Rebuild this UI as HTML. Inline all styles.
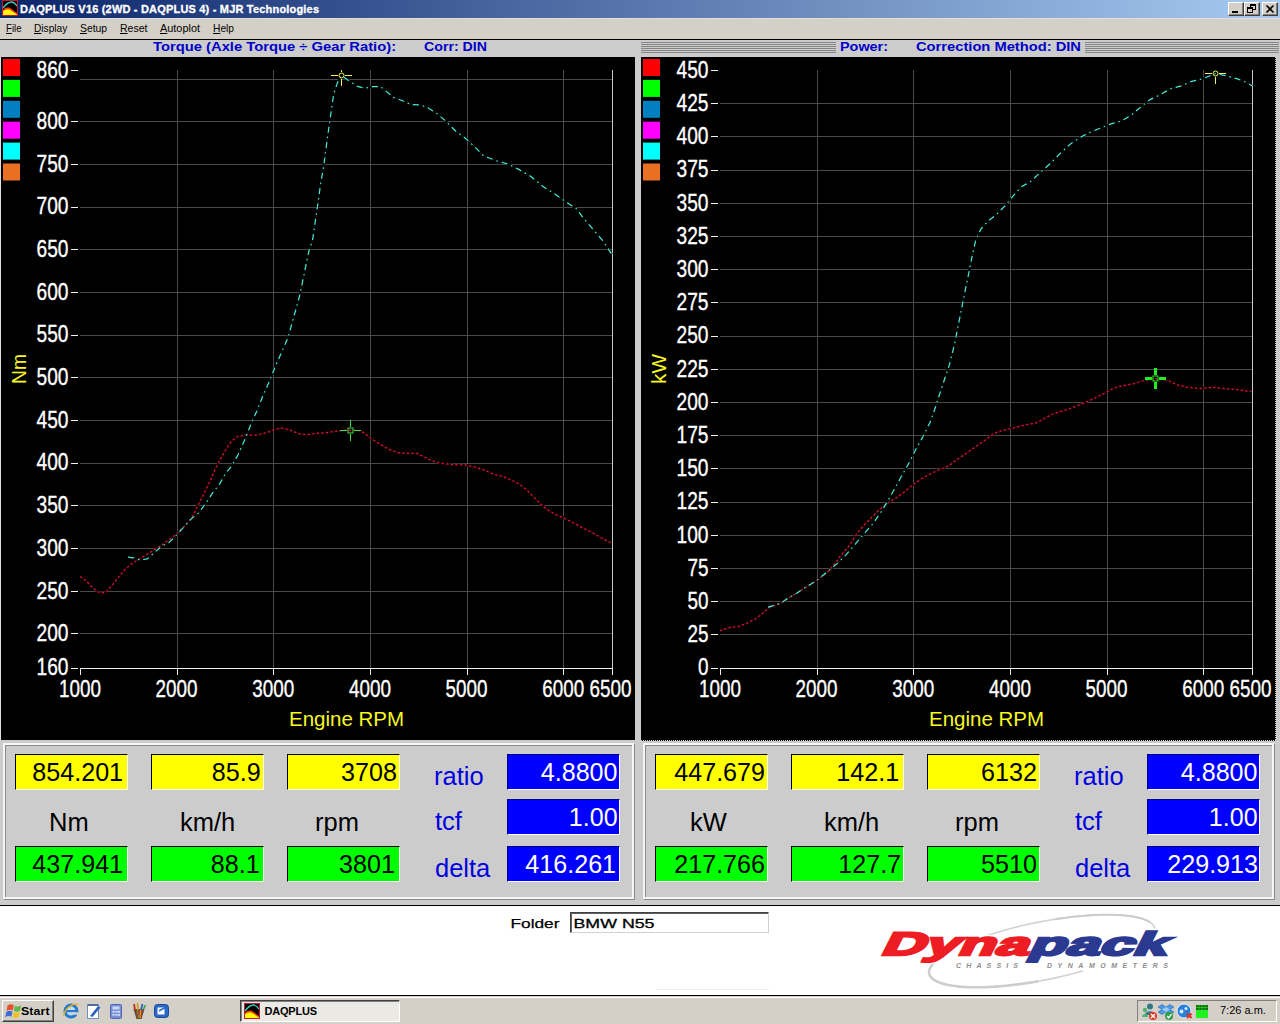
<!DOCTYPE html>
<html><head><meta charset="utf-8"><title>DAQPLUS V16</title>
<style>
html,body{margin:0;padding:0;background:#fff;}
body{width:1280px;height:1024px;overflow:hidden;position:relative;font-family:"Liberation Sans", sans-serif;}
#root{position:absolute;left:0;top:0;width:1280px;height:1024px;overflow:hidden;background:#ccc;}
#root div,#root svg,#root span.abs{position:absolute;}
svg text{font-family:"Liberation Sans", sans-serif;}
#titlebar{left:0;top:0;width:1280px;height:18px;background:linear-gradient(90deg,#0a246a 0%,#a6caf0 100%);}
#title{left:20px;top:2px;color:#fff;font-weight:bold;font-size:11px;line-height:14px;white-space:nowrap;letter-spacing:0.19px;-webkit-text-stroke:0.3px #fff;}
.wbtn{top:2px;width:14px;height:12px;background:#d4d0c8;border:1px solid;border-color:#fff #404040 #404040 #fff;box-shadow:inset -1px -1px 0 #808080;}
#menubar{left:0;top:18px;width:1280px;height:21px;background:#d4d0c8;box-shadow:inset 0 1px 0 #e2dfd8;}
#menubar span{position:absolute;top:4px;font-size:11px;line-height:13px;color:#000;white-space:nowrap;transform-origin:0 0;}
#menubar u{text-decoration:underline;}
#mline{left:0;top:39px;width:1280px;height:1px;background:#000;}
#hdrL{left:0;top:40px;width:641px;height:17px;background:#ccc;}
#hdrR{left:641px;top:40px;width:639px;height:17px;background:#ccc;}
#stripes{left:0;top:2px;width:638px;height:11px;background:repeating-linear-gradient(180deg,#858585 0,#858585 1px,#ccc 1px,#ccc 2px);}
#hdrRlab{left:195px;top:0;width:249px;height:17px;background:#ccc;}
.hd{font-weight:bold;font-size:13px;line-height:15px;color:#0000c8;white-space:nowrap;top:-1px;transform-origin:0 0;}
.plot{top:57px;width:634px;height:683px;background:#000;}
#edgeL{left:0;top:57px;width:1px;height:683px;background:#e0e0e0;}
.frame{top:743px;width:627px;height:152px;border:2px solid #f6f6f6;box-shadow:1px 1px 0 #8c8c8c, inset 1px 1px 0 #8c8c8c;}
.box{width:111px;height:34px;border:1px solid;border-color:#000 #fff #fff #000;font-size:26px;line-height:34px;text-align:right;white-space:nowrap;}
.box span{position:absolute;right:2px;top:0px;transform:scaleX(.965);transform-origin:100% 50%;}
.box i.p{display:inline-block;width:1.8px;}
.box.y{background:#ffff00;color:#000;}
.box.g{background:#00ff00;color:#000;}
.box.b{background:#0000ff;color:#fff;border-color:#000080 #fff #fff #000080;}
.box.b span{right:1px;}
.unit{top:807px;font-size:25.5px;line-height:30px;color:#000;white-space:nowrap;}
.blab{font-size:25.5px;line-height:30px;color:#0000e0;white-space:nowrap;}
#pline{left:0;top:905px;width:1280px;height:1px;background:#000;}
#footer{left:0;top:906px;width:1280px;height:89px;background:#fff;}
#fline{left:0;top:995px;width:1280px;height:1px;background:#000;}
#folderbox{left:570px;top:6px;width:197px;height:19px;border:1px solid;border-color:#404040 #d0d0d0 #d0d0d0 #404040;box-shadow:inset 1px 1px 0 #606060;background:#fff;}
#taskbar{left:0;top:996px;width:1280px;height:28px;background:#d4d0c8;box-shadow:inset 0 1px 0 #d4d0c8, inset 0 2px 0 #fff;}
#start{left:2px;top:4px;width:50px;height:20px;background:#d4d0c8;border:1px solid;border-color:#fff #404040 #404040 #fff;box-shadow:inset -1px -1px 0 #808080;}
#start b{position:absolute;left:18px;top:4px;font-size:11px;line-height:13px;letter-spacing:0.1px;transform:scaleX(1.12);transform-origin:0 0;}
#task{left:240px;top:4px;width:158px;height:20px;border:1px solid;border-color:#404040 #fff #fff #404040;box-shadow:inset 1px 1px 0 #808080;background:#ebe9e4;}
#task b{position:absolute;left:23.5px;top:3.5px;font-size:11px;line-height:13px;letter-spacing:-0.2px;}
#tray{left:1137px;top:4px;width:138px;height:20px;border:1px solid;border-color:#808080 #fff #fff #808080;}
#clock{left:82px;top:3px;font-size:11px;line-height:13px;white-space:nowrap;}
.appicon{position:absolute;}
</style></head>
<body>
<div id="root">
  <div id="titlebar">
    <svg class="appicon" style="left:2px;top:0px" width="16" height="16" viewBox="0 0 16 16">
<rect x="0" y="0" width="16" height="16" fill="#000"/>
<path d="M1 16 L1 10 C3 7.5 6 7 8 8 C11 9.5 13 12 15 13 L15 16 Z" fill="#ff4010"/>
<path d="M1 16 L1 11.5 C3 9.5 6 9 8 10 C11 11.5 13 13.5 15 14.5 L15 16 Z" fill="#ffff00"/>
<path d="M1 8 C4 4 7 2 9.5 2 C12 2 13.5 4 15 6" fill="none" stroke="#30d8c8" stroke-width="1.3"/>
<rect x="0.5" y="0.5" width="15" height="15" fill="none" stroke="#c01838" stroke-width="1"/>
</svg>
    <div id="title">DAQPLUS V16 (2WD - DAQPLUS 4) - MJR Technologies</div>
    <div class="wbtn" style="left:1228px"><svg width="14" height="12" style="left:0;top:0"><rect x="3" y="8" width="6" height="2" fill="#000"/></svg></div>
    <div class="wbtn" style="left:1244px"><svg width="14" height="12" style="left:0;top:0"><rect x="5.5" y="1.5" width="5" height="5" fill="none" stroke="#000"/><rect x="5" y="1" width="6" height="2" fill="#000"/><rect x="2.5" y="4.5" width="5" height="5" fill="#d4d0c8" stroke="#000"/><rect x="2" y="4" width="6" height="2" fill="#000"/></svg></div>
    <div class="wbtn" style="left:1262px"><svg width="14" height="12" style="left:0;top:0"><path d="M3.5 2.5 L10.5 9.5 M10.5 2.5 L3.5 9.5" stroke="#000" stroke-width="1.7" fill="none"/></svg></div>
  </div>
  <div id="menubar">
    <span style="left:5.5px;transform:scaleX(.874)"><u>F</u>ile</span>
    <span style="left:33.7px;transform:scaleX(.923)"><u>D</u>isplay</span>
    <span style="left:80px;transform:scaleX(.939)"><u>S</u>etup</span>
    <span style="left:119.5px;transform:scaleX(.957)"><u>R</u>eset</span>
    <span style="left:160px;transform:scaleX(.991)"><u>A</u>utoplot</span>
    <span style="left:212.5px;transform:scaleX(.928)"><u>H</u>elp</span>
  </div>
  <div id="mline"></div>
  <div id="hdrL">
    <span class="abs hd" style="left:153px;transform:scaleX(1.136)" id="t1">Torque (Axle Torque &divide; Gear Ratio):</span>
    <span class="abs hd" style="left:424px;transform:scaleX(1.09)" id="t2">Corr: DIN</span>
  </div>
  <div id="hdrR">
    <div id="stripes"></div>
    <div id="hdrRlab">
      <span class="abs hd" style="left:4px;transform:scaleX(1.107)" id="t3">Power:</span>
      <span class="abs hd" style="left:80px;transform:scaleX(1.131)" id="t4">Correction Method: DIN</span>
    </div>
  </div>
  <div class="plot" style="left:1px"></div>
  <div class="plot" style="left:641px;width:635px;height:684px"></div>
  <div id="edgeL"></div>
  <svg id="charts" style="left:0;top:0" width="1280" height="742" viewBox="0 0 1280 742">
<rect x="3" y="59.0" width="17" height="17" fill="#ff0000"/>
<rect x="3" y="79.9" width="17" height="17" fill="#00ff00"/>
<rect x="3" y="100.8" width="17" height="17" fill="#0080c0"/>
<rect x="3" y="121.7" width="17" height="17" fill="#ff00ff"/>
<rect x="3" y="142.6" width="17" height="17" fill="#00ffff"/>
<rect x="3" y="163.5" width="17" height="17" fill="#e87020"/>
<line x1="80" y1="79.5" x2="612" y2="79.5" stroke="#4a4a4a" stroke-width="1"/>
<line x1="80" y1="121.5" x2="612" y2="121.5" stroke="#4a4a4a" stroke-width="1"/>
<line x1="80" y1="164.5" x2="612" y2="164.5" stroke="#4a4a4a" stroke-width="1"/>
<line x1="80" y1="207.5" x2="612" y2="207.5" stroke="#4a4a4a" stroke-width="1"/>
<line x1="80" y1="249.5" x2="612" y2="249.5" stroke="#4a4a4a" stroke-width="1"/>
<line x1="80" y1="292.5" x2="612" y2="292.5" stroke="#4a4a4a" stroke-width="1"/>
<line x1="80" y1="335.5" x2="612" y2="335.5" stroke="#4a4a4a" stroke-width="1"/>
<line x1="80" y1="377.5" x2="612" y2="377.5" stroke="#4a4a4a" stroke-width="1"/>
<line x1="80" y1="420.5" x2="612" y2="420.5" stroke="#4a4a4a" stroke-width="1"/>
<line x1="80" y1="463.5" x2="612" y2="463.5" stroke="#4a4a4a" stroke-width="1"/>
<line x1="80" y1="505.5" x2="612" y2="505.5" stroke="#4a4a4a" stroke-width="1"/>
<line x1="80" y1="548.5" x2="612" y2="548.5" stroke="#4a4a4a" stroke-width="1"/>
<line x1="80" y1="591.5" x2="612" y2="591.5" stroke="#4a4a4a" stroke-width="1"/>
<line x1="80" y1="633.5" x2="612" y2="633.5" stroke="#4a4a4a" stroke-width="1"/>
<line x1="177.5" y1="70" x2="177.5" y2="668" stroke="#4a4a4a" stroke-width="1"/>
<line x1="273.5" y1="70" x2="273.5" y2="668" stroke="#4a4a4a" stroke-width="1"/>
<line x1="370.5" y1="70" x2="370.5" y2="668" stroke="#4a4a4a" stroke-width="1"/>
<line x1="467.5" y1="70" x2="467.5" y2="668" stroke="#4a4a4a" stroke-width="1"/>
<line x1="563.5" y1="70" x2="563.5" y2="668" stroke="#4a4a4a" stroke-width="1"/>
<line x1="612.5" y1="70" x2="612.5" y2="668" stroke="#c8c8c8" stroke-width="1"/>
<line x1="80" y1="668.5" x2="613" y2="668.5" stroke="#f0f0f0" stroke-width="1"/>
<text x="68.5" y="77.8" font-size="24.3" fill="#ffffff" font-weight="normal" text-anchor="end" textLength="32" lengthAdjust="spacingAndGlyphs" stroke="#fff" stroke-width="0.35">860</text>
<line x1="71" y1="70.5" x2="78" y2="70.5" stroke="#f0f0f0" stroke-width="1"/>
<text x="68.5" y="129.0" font-size="24.3" fill="#ffffff" font-weight="normal" text-anchor="end" textLength="32" lengthAdjust="spacingAndGlyphs" stroke="#fff" stroke-width="0.35">800</text>
<line x1="71" y1="121.5" x2="78" y2="121.5" stroke="#f0f0f0" stroke-width="1"/>
<text x="68.5" y="171.7" font-size="24.3" fill="#ffffff" font-weight="normal" text-anchor="end" textLength="32" lengthAdjust="spacingAndGlyphs" stroke="#fff" stroke-width="0.35">750</text>
<line x1="71" y1="164.5" x2="78" y2="164.5" stroke="#f0f0f0" stroke-width="1"/>
<text x="68.5" y="214.4" font-size="24.3" fill="#ffffff" font-weight="normal" text-anchor="end" textLength="32" lengthAdjust="spacingAndGlyphs" stroke="#fff" stroke-width="0.35">700</text>
<line x1="71" y1="207.5" x2="78" y2="207.5" stroke="#f0f0f0" stroke-width="1"/>
<text x="68.5" y="257.1" font-size="24.3" fill="#ffffff" font-weight="normal" text-anchor="end" textLength="32" lengthAdjust="spacingAndGlyphs" stroke="#fff" stroke-width="0.35">650</text>
<line x1="71" y1="249.5" x2="78" y2="249.5" stroke="#f0f0f0" stroke-width="1"/>
<text x="68.5" y="299.7" font-size="24.3" fill="#ffffff" font-weight="normal" text-anchor="end" textLength="32" lengthAdjust="spacingAndGlyphs" stroke="#fff" stroke-width="0.35">600</text>
<line x1="71" y1="292.5" x2="78" y2="292.5" stroke="#f0f0f0" stroke-width="1"/>
<text x="68.5" y="342.4" font-size="24.3" fill="#ffffff" font-weight="normal" text-anchor="end" textLength="32" lengthAdjust="spacingAndGlyphs" stroke="#fff" stroke-width="0.35">550</text>
<line x1="71" y1="335.5" x2="78" y2="335.5" stroke="#f0f0f0" stroke-width="1"/>
<text x="68.5" y="385.1" font-size="24.3" fill="#ffffff" font-weight="normal" text-anchor="end" textLength="32" lengthAdjust="spacingAndGlyphs" stroke="#fff" stroke-width="0.35">500</text>
<line x1="71" y1="377.5" x2="78" y2="377.5" stroke="#f0f0f0" stroke-width="1"/>
<text x="68.5" y="427.8" font-size="24.3" fill="#ffffff" font-weight="normal" text-anchor="end" textLength="32" lengthAdjust="spacingAndGlyphs" stroke="#fff" stroke-width="0.35">450</text>
<line x1="71" y1="420.5" x2="78" y2="420.5" stroke="#f0f0f0" stroke-width="1"/>
<text x="68.5" y="470.4" font-size="24.3" fill="#ffffff" font-weight="normal" text-anchor="end" textLength="32" lengthAdjust="spacingAndGlyphs" stroke="#fff" stroke-width="0.35">400</text>
<line x1="71" y1="463.5" x2="78" y2="463.5" stroke="#f0f0f0" stroke-width="1"/>
<text x="68.5" y="513.1" font-size="24.3" fill="#ffffff" font-weight="normal" text-anchor="end" textLength="32" lengthAdjust="spacingAndGlyphs" stroke="#fff" stroke-width="0.35">350</text>
<line x1="71" y1="505.5" x2="78" y2="505.5" stroke="#f0f0f0" stroke-width="1"/>
<text x="68.5" y="555.8" font-size="24.3" fill="#ffffff" font-weight="normal" text-anchor="end" textLength="32" lengthAdjust="spacingAndGlyphs" stroke="#fff" stroke-width="0.35">300</text>
<line x1="71" y1="548.5" x2="78" y2="548.5" stroke="#f0f0f0" stroke-width="1"/>
<text x="68.5" y="598.5" font-size="24.3" fill="#ffffff" font-weight="normal" text-anchor="end" textLength="32" lengthAdjust="spacingAndGlyphs" stroke="#fff" stroke-width="0.35">250</text>
<line x1="71" y1="591.5" x2="78" y2="591.5" stroke="#f0f0f0" stroke-width="1"/>
<text x="68.5" y="641.2" font-size="24.3" fill="#ffffff" font-weight="normal" text-anchor="end" textLength="32" lengthAdjust="spacingAndGlyphs" stroke="#fff" stroke-width="0.35">200</text>
<line x1="71" y1="633.5" x2="78" y2="633.5" stroke="#f0f0f0" stroke-width="1"/>
<text x="68.5" y="675.3" font-size="24.3" fill="#ffffff" font-weight="normal" text-anchor="end" textLength="32" lengthAdjust="spacingAndGlyphs" stroke="#fff" stroke-width="0.35">160</text>
<line x1="71" y1="668.5" x2="78" y2="668.5" stroke="#f0f0f0" stroke-width="1"/>
<line x1="80.5" y1="668" x2="80.5" y2="675" stroke="#f0f0f0" stroke-width="1"/>
<text x="80.0" y="697.2" font-size="24.5" fill="#ffffff" font-weight="normal" text-anchor="middle" textLength="42" lengthAdjust="spacingAndGlyphs" stroke="#fff" stroke-width="0.35">1000</text>
<line x1="177.5" y1="668" x2="177.5" y2="675" stroke="#f0f0f0" stroke-width="1"/>
<text x="176.6" y="697.2" font-size="24.5" fill="#ffffff" font-weight="normal" text-anchor="middle" textLength="42" lengthAdjust="spacingAndGlyphs" stroke="#fff" stroke-width="0.35">2000</text>
<line x1="273.5" y1="668" x2="273.5" y2="675" stroke="#f0f0f0" stroke-width="1"/>
<text x="273.3" y="697.2" font-size="24.5" fill="#ffffff" font-weight="normal" text-anchor="middle" textLength="42" lengthAdjust="spacingAndGlyphs" stroke="#fff" stroke-width="0.35">3000</text>
<line x1="370.5" y1="668" x2="370.5" y2="675" stroke="#f0f0f0" stroke-width="1"/>
<text x="369.9" y="697.2" font-size="24.5" fill="#ffffff" font-weight="normal" text-anchor="middle" textLength="42" lengthAdjust="spacingAndGlyphs" stroke="#fff" stroke-width="0.35">4000</text>
<line x1="467.5" y1="668" x2="467.5" y2="675" stroke="#f0f0f0" stroke-width="1"/>
<text x="466.5" y="697.2" font-size="24.5" fill="#ffffff" font-weight="normal" text-anchor="middle" textLength="42" lengthAdjust="spacingAndGlyphs" stroke="#fff" stroke-width="0.35">5000</text>
<line x1="563.5" y1="668" x2="563.5" y2="675" stroke="#f0f0f0" stroke-width="1"/>
<text x="563.2" y="697.2" font-size="24.5" fill="#ffffff" font-weight="normal" text-anchor="middle" textLength="42" lengthAdjust="spacingAndGlyphs" stroke="#fff" stroke-width="0.35">6000</text>
<line x1="612.5" y1="668" x2="612.5" y2="675" stroke="#f0f0f0" stroke-width="1"/>
<text x="610.5" y="697.2" font-size="24.5" fill="#ffffff" font-weight="normal" text-anchor="middle" textLength="42" lengthAdjust="spacingAndGlyphs" stroke="#fff" stroke-width="0.35">6500</text>
<text x="346.5" y="726" font-size="20" fill="#f8f820" font-weight="normal" text-anchor="middle" textLength="115" lengthAdjust="spacingAndGlyphs" >Engine RPM</text>
<g transform="translate(25.6,369) rotate(-90)"><text x="0" y="0" font-size="20.5" fill="#f8f820" font-weight="normal" text-anchor="middle" textLength="30" lengthAdjust="spacingAndGlyphs" >Nm</text></g>
<polyline points="80.3,576.6 86.6,581.3 92.8,588.1 99.1,592.5 105.3,592.5 111.6,585.9 117.8,578.1 124.1,570.3 131.9,563.4 139.7,558.8 147.5,554.1 156.9,548.4 167.8,540.6 177.2,533.4 185.0,525.6 191.3,518.8 197.5,506.3 203.8,493.8 210.0,481.3 214.7,470.3 219.4,460.9 225.6,450.0 231.9,440.6 238.1,436.3 247.5,435.0 256.9,435.0 266.3,432.8 275.6,429.1 283.4,428.1 291.3,430.6 299.1,433.8 306.9,434.7 316.3,433.4 325.6,432.8 335.0,431.3 344.4,430.4 350.5,430.4 360.5,430.6 365.2,433.9 371.0,438.6 379.2,443.8 388.6,449.1 398.0,452.7 407.3,453.4 416.7,453.4 423.8,456.6 430.8,460.2 440.2,463.2 451.9,464.6 465.9,465.1 475.3,467.2 484.7,470.2 494.1,474.5 503.4,476.6 512.8,480.8 519.8,484.3 526.9,490.2 533.9,497.2 540.9,504.2 548.0,510.1 555.0,514.3 564.4,518.3 573.8,523.0 583.1,528.1 592.5,532.8 601.9,538.2 611.3,543.1" fill="none" stroke="#200008" stroke-width="2.2" stroke-linejoin="round"/>
<polyline points="128.1,557.2 133.4,557.8 139.7,560.0 147.5,558.8 153.8,553.1 161.6,546.3 169.4,542.2 177.2,534.4 185.0,525.6 191.3,518.8 199.1,512.5 206.9,501.6 213.1,492.2 219.4,484.4 225.6,473.4 231.9,465.6 238.1,454.7 244.4,440.6 250.6,425.0 256.9,410.9 263.1,395.3 269.4,381.3 275.6,365.6 281.9,351.6 288.1,337.5 292.8,320.3 296.0,309.0 299.4,296.6 304.0,274.8 308.8,251.3 312.5,240.4 316.6,212.3 320.6,184.1 323.8,165.4 327.5,137.3 330.6,115.4 333.8,93.5 337.5,82.6 341.6,75.7 349.4,81.0 357.2,86.3 365.0,88.2 372.8,86.6 380.6,86.6 386.9,91.9 393.1,97.3 402.5,100.7 410.3,104.4 418.1,104.8 425.9,106.6 435.3,112.3 444.7,120.1 455.6,131.0 465.0,137.9 474.4,146.6 483.8,156.0 496.3,160.7 507.2,163.8 518.1,169.1 530.6,176.3 543.1,186.6 555.6,194.4 565.0,201.3 575.9,208.2 583.8,218.5 593.1,229.4 602.5,240.4 611.9,254.4" fill="none" stroke="#020a09" stroke-width="2.2" stroke-linejoin="round"/>
<polyline points="80.3,576.6 86.6,581.3 92.8,588.1 99.1,592.5 105.3,592.5 111.6,585.9 117.8,578.1 124.1,570.3 131.9,563.4 139.7,558.8 147.5,554.1 156.9,548.4 167.8,540.6 177.2,533.4 185.0,525.6 191.3,518.8 197.5,506.3 203.8,493.8 210.0,481.3 214.7,470.3 219.4,460.9 225.6,450.0 231.9,440.6 238.1,436.3 247.5,435.0 256.9,435.0 266.3,432.8 275.6,429.1 283.4,428.1 291.3,430.6 299.1,433.8 306.9,434.7 316.3,433.4 325.6,432.8 335.0,431.3 344.4,430.4 350.5,430.4 360.5,430.6 365.2,433.9 371.0,438.6 379.2,443.8 388.6,449.1 398.0,452.7 407.3,453.4 416.7,453.4 423.8,456.6 430.8,460.2 440.2,463.2 451.9,464.6 465.9,465.1 475.3,467.2 484.7,470.2 494.1,474.5 503.4,476.6 512.8,480.8 519.8,484.3 526.9,490.2 533.9,497.2 540.9,504.2 548.0,510.1 555.0,514.3 564.4,518.3 573.8,523.0 583.1,528.1 592.5,532.8 601.9,538.2 611.3,543.1" fill="none" stroke="#e01830" stroke-width="1.25" stroke-dasharray="2 2.6" stroke-linejoin="round"/>
<polyline points="128.1,557.2 133.4,557.8 139.7,560.0 147.5,558.8 153.8,553.1 161.6,546.3 169.4,542.2 177.2,534.4 185.0,525.6 191.3,518.8 199.1,512.5 206.9,501.6 213.1,492.2 219.4,484.4 225.6,473.4 231.9,465.6 238.1,454.7 244.4,440.6 250.6,425.0 256.9,410.9 263.1,395.3 269.4,381.3 275.6,365.6 281.9,351.6 288.1,337.5 292.8,320.3 296.0,309.0 299.4,296.6 304.0,274.8 308.8,251.3 312.5,240.4 316.6,212.3 320.6,184.1 323.8,165.4 327.5,137.3 330.6,115.4 333.8,93.5 337.5,82.6 341.6,75.7 349.4,81.0 357.2,86.3 365.0,88.2 372.8,86.6 380.6,86.6 386.9,91.9 393.1,97.3 402.5,100.7 410.3,104.4 418.1,104.8 425.9,106.6 435.3,112.3 444.7,120.1 455.6,131.0 465.0,137.9 474.4,146.6 483.8,156.0 496.3,160.7 507.2,163.8 518.1,169.1 530.6,176.3 543.1,186.6 555.6,194.4 565.0,201.3 575.9,208.2 583.8,218.5 593.1,229.4 602.5,240.4 611.9,254.4" fill="none" stroke="#48e8d8" stroke-width="1.2" stroke-dasharray="6 4 1.5 4" stroke-linejoin="round"/>
<circle cx="341.5" cy="75.5" r="2.5" fill="none" stroke="#f0f060" stroke-width="1"/><line x1="331.0" y1="75.5" x2="338.0" y2="75.5" stroke="#f0f060" stroke-width="1"/><line x1="345.0" y1="75.5" x2="352.0" y2="75.5" stroke="#f0f060" stroke-width="1"/><line x1="341.5" y1="70" x2="341.5" y2="72.0" stroke="#f0f060" stroke-width="1"/><line x1="341.5" y1="79.0" x2="341.5" y2="86.0" stroke="#f0f060" stroke-width="1"/>
<rect x="348.0" y="428.0" width="5" height="5" fill="none" stroke="#40e040" stroke-width="1"/><line x1="340.0" y1="430.5" x2="347.0" y2="430.5" stroke="#40e040" stroke-width="1"/><line x1="354.0" y1="430.5" x2="361.0" y2="430.5" stroke="#40e040" stroke-width="1"/><line x1="350.5" y1="420.0" x2="350.5" y2="427.0" stroke="#40e040" stroke-width="1"/><line x1="350.5" y1="434.0" x2="350.5" y2="441.0" stroke="#40e040" stroke-width="1"/>
<rect x="643" y="59.0" width="17" height="17" fill="#ff0000"/>
<rect x="643" y="79.9" width="17" height="17" fill="#00ff00"/>
<rect x="643" y="100.8" width="17" height="17" fill="#0080c0"/>
<rect x="643" y="121.7" width="17" height="17" fill="#ff00ff"/>
<rect x="643" y="142.6" width="17" height="17" fill="#00ffff"/>
<rect x="643" y="163.5" width="17" height="17" fill="#e87020"/>
<line x1="720" y1="103.5" x2="1252" y2="103.5" stroke="#4a4a4a" stroke-width="1"/>
<line x1="720" y1="136.5" x2="1252" y2="136.5" stroke="#4a4a4a" stroke-width="1"/>
<line x1="720" y1="170.5" x2="1252" y2="170.5" stroke="#4a4a4a" stroke-width="1"/>
<line x1="720" y1="203.5" x2="1252" y2="203.5" stroke="#4a4a4a" stroke-width="1"/>
<line x1="720" y1="236.5" x2="1252" y2="236.5" stroke="#4a4a4a" stroke-width="1"/>
<line x1="720" y1="269.5" x2="1252" y2="269.5" stroke="#4a4a4a" stroke-width="1"/>
<line x1="720" y1="302.5" x2="1252" y2="302.5" stroke="#4a4a4a" stroke-width="1"/>
<line x1="720" y1="336.5" x2="1252" y2="336.5" stroke="#4a4a4a" stroke-width="1"/>
<line x1="720" y1="369.5" x2="1252" y2="369.5" stroke="#4a4a4a" stroke-width="1"/>
<line x1="720" y1="402.5" x2="1252" y2="402.5" stroke="#4a4a4a" stroke-width="1"/>
<line x1="720" y1="435.5" x2="1252" y2="435.5" stroke="#4a4a4a" stroke-width="1"/>
<line x1="720" y1="468.5" x2="1252" y2="468.5" stroke="#4a4a4a" stroke-width="1"/>
<line x1="720" y1="502.5" x2="1252" y2="502.5" stroke="#4a4a4a" stroke-width="1"/>
<line x1="720" y1="535.5" x2="1252" y2="535.5" stroke="#4a4a4a" stroke-width="1"/>
<line x1="720" y1="568.5" x2="1252" y2="568.5" stroke="#4a4a4a" stroke-width="1"/>
<line x1="720" y1="601.5" x2="1252" y2="601.5" stroke="#4a4a4a" stroke-width="1"/>
<line x1="720" y1="634.5" x2="1252" y2="634.5" stroke="#4a4a4a" stroke-width="1"/>
<line x1="817.5" y1="70" x2="817.5" y2="668" stroke="#4a4a4a" stroke-width="1"/>
<line x1="913.5" y1="70" x2="913.5" y2="668" stroke="#4a4a4a" stroke-width="1"/>
<line x1="1010.5" y1="70" x2="1010.5" y2="668" stroke="#4a4a4a" stroke-width="1"/>
<line x1="1107.5" y1="70" x2="1107.5" y2="668" stroke="#4a4a4a" stroke-width="1"/>
<line x1="1203.5" y1="70" x2="1203.5" y2="668" stroke="#4a4a4a" stroke-width="1"/>
<line x1="1252.5" y1="70" x2="1252.5" y2="668" stroke="#c8c8c8" stroke-width="1"/>
<line x1="720" y1="668.5" x2="1253" y2="668.5" stroke="#f0f0f0" stroke-width="1"/>
<text x="708.5" y="77.8" font-size="24.3" fill="#ffffff" font-weight="normal" text-anchor="end" textLength="32" lengthAdjust="spacingAndGlyphs" stroke="#fff" stroke-width="0.35">450</text>
<line x1="711" y1="70.5" x2="718" y2="70.5" stroke="#f0f0f0" stroke-width="1"/>
<text x="708.5" y="111.0" font-size="24.3" fill="#ffffff" font-weight="normal" text-anchor="end" textLength="32" lengthAdjust="spacingAndGlyphs" stroke="#fff" stroke-width="0.35">425</text>
<line x1="711" y1="103.5" x2="718" y2="103.5" stroke="#f0f0f0" stroke-width="1"/>
<text x="708.5" y="144.2" font-size="24.3" fill="#ffffff" font-weight="normal" text-anchor="end" textLength="32" lengthAdjust="spacingAndGlyphs" stroke="#fff" stroke-width="0.35">400</text>
<line x1="711" y1="136.5" x2="718" y2="136.5" stroke="#f0f0f0" stroke-width="1"/>
<text x="708.5" y="177.4" font-size="24.3" fill="#ffffff" font-weight="normal" text-anchor="end" textLength="32" lengthAdjust="spacingAndGlyphs" stroke="#fff" stroke-width="0.35">375</text>
<line x1="711" y1="170.5" x2="718" y2="170.5" stroke="#f0f0f0" stroke-width="1"/>
<text x="708.5" y="210.6" font-size="24.3" fill="#ffffff" font-weight="normal" text-anchor="end" textLength="32" lengthAdjust="spacingAndGlyphs" stroke="#fff" stroke-width="0.35">350</text>
<line x1="711" y1="203.5" x2="718" y2="203.5" stroke="#f0f0f0" stroke-width="1"/>
<text x="708.5" y="243.8" font-size="24.3" fill="#ffffff" font-weight="normal" text-anchor="end" textLength="32" lengthAdjust="spacingAndGlyphs" stroke="#fff" stroke-width="0.35">325</text>
<line x1="711" y1="236.5" x2="718" y2="236.5" stroke="#f0f0f0" stroke-width="1"/>
<text x="708.5" y="277.0" font-size="24.3" fill="#ffffff" font-weight="normal" text-anchor="end" textLength="32" lengthAdjust="spacingAndGlyphs" stroke="#fff" stroke-width="0.35">300</text>
<line x1="711" y1="269.5" x2="718" y2="269.5" stroke="#f0f0f0" stroke-width="1"/>
<text x="708.5" y="310.2" font-size="24.3" fill="#ffffff" font-weight="normal" text-anchor="end" textLength="32" lengthAdjust="spacingAndGlyphs" stroke="#fff" stroke-width="0.35">275</text>
<line x1="711" y1="302.5" x2="718" y2="302.5" stroke="#f0f0f0" stroke-width="1"/>
<text x="708.5" y="343.4" font-size="24.3" fill="#ffffff" font-weight="normal" text-anchor="end" textLength="32" lengthAdjust="spacingAndGlyphs" stroke="#fff" stroke-width="0.35">250</text>
<line x1="711" y1="336.5" x2="718" y2="336.5" stroke="#f0f0f0" stroke-width="1"/>
<text x="708.5" y="376.6" font-size="24.3" fill="#ffffff" font-weight="normal" text-anchor="end" textLength="32" lengthAdjust="spacingAndGlyphs" stroke="#fff" stroke-width="0.35">225</text>
<line x1="711" y1="369.5" x2="718" y2="369.5" stroke="#f0f0f0" stroke-width="1"/>
<text x="708.5" y="409.7" font-size="24.3" fill="#ffffff" font-weight="normal" text-anchor="end" textLength="32" lengthAdjust="spacingAndGlyphs" stroke="#fff" stroke-width="0.35">200</text>
<line x1="711" y1="402.5" x2="718" y2="402.5" stroke="#f0f0f0" stroke-width="1"/>
<text x="708.5" y="442.9" font-size="24.3" fill="#ffffff" font-weight="normal" text-anchor="end" textLength="32" lengthAdjust="spacingAndGlyphs" stroke="#fff" stroke-width="0.35">175</text>
<line x1="711" y1="435.5" x2="718" y2="435.5" stroke="#f0f0f0" stroke-width="1"/>
<text x="708.5" y="476.1" font-size="24.3" fill="#ffffff" font-weight="normal" text-anchor="end" textLength="32" lengthAdjust="spacingAndGlyphs" stroke="#fff" stroke-width="0.35">150</text>
<line x1="711" y1="468.5" x2="718" y2="468.5" stroke="#f0f0f0" stroke-width="1"/>
<text x="708.5" y="509.3" font-size="24.3" fill="#ffffff" font-weight="normal" text-anchor="end" textLength="32" lengthAdjust="spacingAndGlyphs" stroke="#fff" stroke-width="0.35">125</text>
<line x1="711" y1="502.5" x2="718" y2="502.5" stroke="#f0f0f0" stroke-width="1"/>
<text x="708.5" y="542.5" font-size="24.3" fill="#ffffff" font-weight="normal" text-anchor="end" textLength="32" lengthAdjust="spacingAndGlyphs" stroke="#fff" stroke-width="0.35">100</text>
<line x1="711" y1="535.5" x2="718" y2="535.5" stroke="#f0f0f0" stroke-width="1"/>
<text x="708.5" y="575.7" font-size="24.3" fill="#ffffff" font-weight="normal" text-anchor="end" textLength="21" lengthAdjust="spacingAndGlyphs" stroke="#fff" stroke-width="0.35">75</text>
<line x1="711" y1="568.5" x2="718" y2="568.5" stroke="#f0f0f0" stroke-width="1"/>
<text x="708.5" y="608.9" font-size="24.3" fill="#ffffff" font-weight="normal" text-anchor="end" textLength="21" lengthAdjust="spacingAndGlyphs" stroke="#fff" stroke-width="0.35">50</text>
<line x1="711" y1="601.5" x2="718" y2="601.5" stroke="#f0f0f0" stroke-width="1"/>
<text x="708.5" y="642.1" font-size="24.3" fill="#ffffff" font-weight="normal" text-anchor="end" textLength="21" lengthAdjust="spacingAndGlyphs" stroke="#fff" stroke-width="0.35">25</text>
<line x1="711" y1="634.5" x2="718" y2="634.5" stroke="#f0f0f0" stroke-width="1"/>
<text x="708.5" y="675.3" font-size="24.3" fill="#ffffff" font-weight="normal" text-anchor="end" textLength="10.5" lengthAdjust="spacingAndGlyphs" stroke="#fff" stroke-width="0.35">0</text>
<line x1="711" y1="668.5" x2="718" y2="668.5" stroke="#f0f0f0" stroke-width="1"/>
<line x1="720.5" y1="668" x2="720.5" y2="675" stroke="#f0f0f0" stroke-width="1"/>
<text x="720.0" y="697.2" font-size="24.5" fill="#ffffff" font-weight="normal" text-anchor="middle" textLength="42" lengthAdjust="spacingAndGlyphs" stroke="#fff" stroke-width="0.35">1000</text>
<line x1="817.5" y1="668" x2="817.5" y2="675" stroke="#f0f0f0" stroke-width="1"/>
<text x="816.6" y="697.2" font-size="24.5" fill="#ffffff" font-weight="normal" text-anchor="middle" textLength="42" lengthAdjust="spacingAndGlyphs" stroke="#fff" stroke-width="0.35">2000</text>
<line x1="913.5" y1="668" x2="913.5" y2="675" stroke="#f0f0f0" stroke-width="1"/>
<text x="913.3" y="697.2" font-size="24.5" fill="#ffffff" font-weight="normal" text-anchor="middle" textLength="42" lengthAdjust="spacingAndGlyphs" stroke="#fff" stroke-width="0.35">3000</text>
<line x1="1010.5" y1="668" x2="1010.5" y2="675" stroke="#f0f0f0" stroke-width="1"/>
<text x="1009.9" y="697.2" font-size="24.5" fill="#ffffff" font-weight="normal" text-anchor="middle" textLength="42" lengthAdjust="spacingAndGlyphs" stroke="#fff" stroke-width="0.35">4000</text>
<line x1="1107.5" y1="668" x2="1107.5" y2="675" stroke="#f0f0f0" stroke-width="1"/>
<text x="1106.5" y="697.2" font-size="24.5" fill="#ffffff" font-weight="normal" text-anchor="middle" textLength="42" lengthAdjust="spacingAndGlyphs" stroke="#fff" stroke-width="0.35">5000</text>
<line x1="1203.5" y1="668" x2="1203.5" y2="675" stroke="#f0f0f0" stroke-width="1"/>
<text x="1203.2" y="697.2" font-size="24.5" fill="#ffffff" font-weight="normal" text-anchor="middle" textLength="42" lengthAdjust="spacingAndGlyphs" stroke="#fff" stroke-width="0.35">6000</text>
<line x1="1252.5" y1="668" x2="1252.5" y2="675" stroke="#f0f0f0" stroke-width="1"/>
<text x="1250.5" y="697.2" font-size="24.5" fill="#ffffff" font-weight="normal" text-anchor="middle" textLength="42" lengthAdjust="spacingAndGlyphs" stroke="#fff" stroke-width="0.35">6500</text>
<text x="986.5" y="726" font-size="20" fill="#f8f820" font-weight="normal" text-anchor="middle" textLength="115" lengthAdjust="spacingAndGlyphs" >Engine RPM</text>
<g transform="translate(665.6,369) rotate(-90)"><text x="0" y="0" font-size="20.5" fill="#f8f820" font-weight="normal" text-anchor="middle" textLength="30" lengthAdjust="spacingAndGlyphs" >kW</text></g>
<polyline points="719.9,630.8 729.3,627.6 738.1,626.7 746.9,623.2 755.7,618.8 763.0,612.9 770.3,607.1 779.1,604.1 787.9,598.3 796.7,593.3 805.5,587.4 817.2,580.1 826.0,573.4 833.3,566.0 840.6,555.8 849.4,545.5 856.7,533.8 864.1,525.0 871.4,517.7 878.7,510.4 887.5,503.0 896.3,497.8 905.1,491.3 913.9,484.0 922.7,478.1 931.4,473.2 940.2,469.4 949.0,465.5 957.8,459.1 966.6,453.2 975.4,446.8 984.2,440.9 993.0,434.2 997.5,431.9 1010.6,428.6 1023.8,425.3 1036.9,422.7 1045.6,417.7 1054.4,413.3 1067.5,409.6 1080.6,404.5 1093.8,398.6 1104.7,393.2 1113.5,388.1 1122.2,385.9 1133.1,383.8 1144.1,380.5 1155.5,378.7 1168.1,380.5 1176.9,384.8 1185.6,387.0 1198.8,388.6 1214.1,387.3 1225.0,388.6 1238.1,389.7 1251.3,391.6" fill="none" stroke="#200008" stroke-width="2.2" stroke-linejoin="round"/>
<polyline points="768.0,607.1 773.2,605.6 780.6,603.2 787.9,598.3 796.7,593.3 805.5,587.4 817.2,580.1 828.9,570.4 837.7,563.1 846.5,554.3 855.3,544.1 864.1,533.8 872.9,523.6 880.2,513.3 887.5,501.6 894.8,488.4 902.1,475.2 909.5,462.0 915.3,450.3 922.7,437.1 930.0,422.5 935.0,408.5 938.7,397.0 943.9,381.2 949.2,365.4 954.5,344.3 958.0,326.7 961.5,309.1 965.0,291.5 968.6,274.0 972.1,256.4 975.6,240.6 980.9,229.0 987.9,221.2 996.7,214.2 1005.5,205.4 1012.5,196.6 1021.3,186.8 1030.1,181.9 1038.9,173.8 1049.4,164.3 1060.0,153.7 1070.5,143.9 1081.1,136.9 1091.6,131.6 1102.2,127.4 1110.9,123.9 1121.5,121.0 1130.3,115.8 1140.8,107.0 1149.6,99.9 1160.2,94.7 1170.7,88.7 1181.3,85.9 1191.8,81.3 1202.3,78.9 1215.4,73.6 1227.0,76.0 1237.5,78.9 1246.3,82.4 1252.3,85.9" fill="none" stroke="#020a09" stroke-width="2.2" stroke-linejoin="round"/>
<polyline points="719.9,630.8 729.3,627.6 738.1,626.7 746.9,623.2 755.7,618.8 763.0,612.9 770.3,607.1 779.1,604.1 787.9,598.3 796.7,593.3 805.5,587.4 817.2,580.1 826.0,573.4 833.3,566.0 840.6,555.8 849.4,545.5 856.7,533.8 864.1,525.0 871.4,517.7 878.7,510.4 887.5,503.0 896.3,497.8 905.1,491.3 913.9,484.0 922.7,478.1 931.4,473.2 940.2,469.4 949.0,465.5 957.8,459.1 966.6,453.2 975.4,446.8 984.2,440.9 993.0,434.2 997.5,431.9 1010.6,428.6 1023.8,425.3 1036.9,422.7 1045.6,417.7 1054.4,413.3 1067.5,409.6 1080.6,404.5 1093.8,398.6 1104.7,393.2 1113.5,388.1 1122.2,385.9 1133.1,383.8 1144.1,380.5 1155.5,378.7 1168.1,380.5 1176.9,384.8 1185.6,387.0 1198.8,388.6 1214.1,387.3 1225.0,388.6 1238.1,389.7 1251.3,391.6" fill="none" stroke="#e01830" stroke-width="1.25" stroke-dasharray="2 2.6" stroke-linejoin="round"/>
<polyline points="768.0,607.1 773.2,605.6 780.6,603.2 787.9,598.3 796.7,593.3 805.5,587.4 817.2,580.1 828.9,570.4 837.7,563.1 846.5,554.3 855.3,544.1 864.1,533.8 872.9,523.6 880.2,513.3 887.5,501.6 894.8,488.4 902.1,475.2 909.5,462.0 915.3,450.3 922.7,437.1 930.0,422.5 935.0,408.5 938.7,397.0 943.9,381.2 949.2,365.4 954.5,344.3 958.0,326.7 961.5,309.1 965.0,291.5 968.6,274.0 972.1,256.4 975.6,240.6 980.9,229.0 987.9,221.2 996.7,214.2 1005.5,205.4 1012.5,196.6 1021.3,186.8 1030.1,181.9 1038.9,173.8 1049.4,164.3 1060.0,153.7 1070.5,143.9 1081.1,136.9 1091.6,131.6 1102.2,127.4 1110.9,123.9 1121.5,121.0 1130.3,115.8 1140.8,107.0 1149.6,99.9 1160.2,94.7 1170.7,88.7 1181.3,85.9 1191.8,81.3 1202.3,78.9 1215.4,73.6 1227.0,76.0 1237.5,78.9 1246.3,82.4 1252.3,85.9" fill="none" stroke="#48e8d8" stroke-width="1.2" stroke-dasharray="6 4 1.5 4" stroke-linejoin="round"/>
<circle cx="1215.5" cy="73.5" r="2.5" fill="none" stroke="#f0f060" stroke-width="1"/><line x1="1205.0" y1="73.5" x2="1212.0" y2="73.5" stroke="#f0f060" stroke-width="1"/><line x1="1219.0" y1="73.5" x2="1226.0" y2="73.5" stroke="#f0f060" stroke-width="1"/><line x1="1215.5" y1="77.0" x2="1215.5" y2="84.0" stroke="#f0f060" stroke-width="1"/>
<rect x="1153.0" y="376.0" width="5" height="5" fill="none" stroke="#20f020" stroke-width="1"/><line x1="1145.0" y1="378.5" x2="1152.0" y2="378.5" stroke="#20f020" stroke-width="3"/><line x1="1159.0" y1="378.5" x2="1166.0" y2="378.5" stroke="#20f020" stroke-width="3"/><line x1="1155.5" y1="368.0" x2="1155.5" y2="375.0" stroke="#20f020" stroke-width="3"/><line x1="1155.5" y1="382.0" x2="1155.5" y2="389.0" stroke="#20f020" stroke-width="3"/>
<line x1="641" y1="740.5" x2="1276" y2="740.5" stroke="#ccc" stroke-width="1" stroke-dasharray="1 1"/>
<line x1="1275.5" y1="57" x2="1275.5" y2="741" stroke="#ccc" stroke-width="1" stroke-dasharray="1 1"/>
  </svg>
<div class="frame" style="left:3px"></div>
<div class="box y" style="left:15px;top:754px"><span>854.201<i class="p"></i></span></div>
<div class="box g" style="left:15px;top:846px"><span>437.941<i class="p"></i></span></div>
<div class="box y" style="left:151px;top:754px"><span>85.9</span></div>
<div class="box g" style="left:151px;top:846px"><span>88.1<i class="p"></i></span></div>
<div class="box y" style="left:287px;top:754px"><span>3708</span></div>
<div class="box g" style="left:287px;top:846px"><span>3801<i class="p"></i></span></div>
<div class="unit" style="left:49px;width:40px">Nm</div>
<div class="unit" style="left:180px;width:55px">km/h</div>
<div class="unit" style="left:315px;width:45px">rpm</div>
<div class="blab" style="left:434px;top:761px">ratio</div>
<div class="blab" style="left:435px;top:806px">tcf</div>
<div class="blab" style="left:435px;top:853px">delta</div>
<div class="box b" style="left:507px;top:754px;height:34px"><span>4.8800</span></div>
<div class="box b" style="left:507px;top:799px;height:34px"><span>1.00</span></div>
<div class="box b" style="left:507px;top:846px;height:34px"><span>416.261<i class="p"></i></span></div>
<div class="frame" style="left:643px"></div>
<div class="box y" style="left:655px;top:754px"><span>447.679</span></div>
<div class="box g" style="left:655px;top:846px"><span>217.766</span></div>
<div class="box y" style="left:791px;top:754px"><span>142.1<i class="p"></i></span></div>
<div class="box g" style="left:791px;top:846px"><span>127.7</span></div>
<div class="box y" style="left:927px;top:754px"><span>6132</span></div>
<div class="box g" style="left:927px;top:846px"><span>5510</span></div>
<div class="unit" style="left:690px;width:40px">kW</div>
<div class="unit" style="left:824px;width:55px">km/h</div>
<div class="unit" style="left:955px;width:45px">rpm</div>
<div class="blab" style="left:1074px;top:761px">ratio</div>
<div class="blab" style="left:1075px;top:806px">tcf</div>
<div class="blab" style="left:1075px;top:853px">delta</div>
<div class="box b" style="left:1147px;top:754px;height:34px"><span>4.8800</span></div>
<div class="box b" style="left:1147px;top:799px;height:34px"><span>1.00</span></div>
<div class="box b" style="left:1147px;top:846px;height:34px"><span>229.913</span></div>
  <div id="pline"></div>
  <div id="footer">
    <div id="folderbox"></div>
    <svg style="left:0;top:0" width="1280" height="89" viewBox="0 906 1280 89">
      <text x="510.5" y="928.3" font-size="13" fill="#000" font-weight="normal" text-anchor="start" textLength="49" lengthAdjust="spacingAndGlyphs" stroke="#000" stroke-width="0.25">Folder</text>
<text x="573.5" y="928" font-size="13" fill="#000" font-weight="normal" text-anchor="start" textLength="81" lengthAdjust="spacingAndGlyphs" stroke="#000" stroke-width="0.3">BMW N55</text>
<line x1="656" y1="989.5" x2="769" y2="989.5" stroke="#ececec"/>
<g id="logo"><path d="M1082.3 971.1 L1075.4 973.0 L1068.4 974.8 L1061.3 976.5 L1054.2 978.1 L1046.9 979.6 L1039.7 981.0 L1032.5 982.2 L1025.3 983.3 L1018.2 984.3 L1011.1 985.2 L1004.2 985.9 L997.5 986.5 L990.9 986.9 L984.6 987.1 L978.5 987.3 L972.6 987.3 L967.0 987.1 L961.8 986.8 L956.9 986.3 L952.3 985.7 L948.1 984.9 L944.2 984.0 L940.8 983.0 L937.8 981.8 L935.2 980.5 L933.1 979.1 L931.4 977.6 L930.2 976.0 L929.4 974.2 L929.1 972.4 L929.2 970.5 L929.9 968.5 L930.9 966.4 L932.5 964.3 L934.5 962.1 L936.9 959.8 L939.7 957.6 L943.0 955.3 L946.7 952.9 L950.8 950.6 L955.2 948.3 L960.0 946.0 L965.2 943.7 L970.7 941.4 L976.4 939.2 L982.4 937.0 L988.7 934.9 L995.2 932.9 L1001.9 930.9 L1008.7 929.0 L1015.7 927.2 L1022.8 925.5 L1030.0 923.9 L1037.2 922.4 L1044.4 921.0 L1051.7 919.8 L1058.9 918.6 L1066.0 917.7 L1073.0 916.8 L1079.9 916.1 L1086.6 915.5 L1093.2 915.1 L1099.5 914.8 L1105.7 914.7 L1111.5 914.8 L1117.1 914.9 L1122.3 915.2 L1127.2 915.7 L1131.8 916.3 L1136.0 917.1 L1139.8 918.0 L1143.2 919.0 L1146.2 920.2 L1148.8 921.5 L1150.9 922.9 L1152.6 924.4 L1153.8 926.1 L1154.6 927.8 L1154.9 929.6 L1154.7 931.6" fill="none" stroke="#d2d2d2" stroke-width="1.6" stroke-linecap="round"/><path d="M1037.8 981.3 L1035.2 981.7 L1032.7 982.2 L1030.1 982.6 L1027.5 983.0 L1025.0 983.4 L1022.4 983.7 L1019.9 984.1 L1017.3 984.4 L1014.8 984.7 L1012.3 985.0 L1009.8 985.3 L1007.4 985.6 L1004.9 985.8 L1002.5 986.0 L1000.1 986.3 L997.7 986.4 L995.3 986.6 L993.0 986.8 L990.6 986.9 L988.4 987.0 L986.1 987.1 L983.9 987.2 L981.7 987.2 L979.5 987.3 L977.4 987.3 L975.2 987.3 L973.2 987.3 L971.1 987.2 L969.2 987.2 L967.2 987.1 L965.3 987.0 L963.4 986.9 L961.6 986.7 L959.8 986.6 L958.0 986.4 L956.3 986.2 L954.7 986.0 L953.0 985.8 L951.5 985.5 L949.9 985.3 L948.5 985.0 L947.0 984.7 L945.7 984.4 L944.3 984.1 L943.1 983.7 L941.9 983.3 L940.7 982.9 L939.6 982.5 L938.5 982.1 L937.5 981.7 L936.5 981.2 L935.7 980.8 L934.8 980.3 L934.0 979.8 L933.3 979.3 L932.6 978.8 L932.0 978.2 L931.5 977.7 L931.0 977.1 L930.5 976.5 L930.1 975.9 L929.8 975.3 L929.6 974.7 L929.3 974.0 L929.2 973.4 L929.1 972.7 L929.1 972.0 L929.1 971.4 L929.2 970.7 L929.4 970.0 L929.6 969.3 L929.8 968.5 L930.2 967.8 L930.6 967.1 L931.0 966.3 L931.5 965.6 L932.1 964.8 L932.7 964.0 L933.4 963.2 L934.1 962.4" fill="none" stroke="#cdcdcd" stroke-width="2.6" stroke-linecap="round"/><path d="M1056.0 919.1 L1057.6 918.8 L1059.2 918.6 L1060.7 918.4 L1062.3 918.2 L1063.9 917.9 L1065.5 917.7 L1067.0 917.5 L1068.6 917.3 L1070.1 917.1 L1071.7 917.0 L1073.2 916.8 L1074.8 916.6 L1076.3 916.5 L1077.8 916.3 L1079.3 916.2 L1080.8 916.0 L1082.3 915.9 L1083.8 915.8 L1085.3 915.6 L1086.8 915.5 L1088.2 915.4 L1089.7 915.3 L1091.1 915.2 L1092.6 915.2 L1094.0 915.1 L1095.4 915.0 L1096.8 914.9 L1098.2 914.9 L1099.6 914.8 L1101.0 914.8 L1102.3 914.8 L1103.7 914.7 L1105.0 914.7 L1106.3 914.7 L1107.7 914.7 L1109.0 914.7 L1110.2 914.7 L1111.5 914.8 L1112.8 914.8 L1114.0 914.8 L1115.2 914.9 L1116.4 914.9 L1117.6 915.0 L1118.8 915.0 L1120.0 915.1 L1121.1 915.2 L1122.3 915.2 L1123.4 915.3 L1124.5 915.4 L1125.6 915.5 L1126.6 915.7 L1127.7 915.8 L1128.7 915.9 L1129.7 916.0 L1130.7 916.2 L1131.7 916.3 L1132.7 916.5 L1133.6 916.6 L1134.6 916.8 L1135.5 917.0 L1136.4 917.2 L1137.2 917.4 L1138.1 917.6 L1138.9 917.8 L1139.7 918.0 L1140.5 918.2 L1141.3 918.4 L1142.0 918.6 L1142.8 918.9 L1143.5 919.1 L1144.2 919.4 L1144.8 919.6 L1145.5 919.9 L1146.1 920.1 L1146.7 920.4 L1147.3 920.7 L1147.9 921.0 L1148.4 921.3 L1149.0 921.6 L1149.5 921.9" fill="none" stroke="#cccccc" stroke-width="2.0" stroke-linecap="round"/><g transform="translate(879.5,955.2) skewX(-27)"><text x="0" y="0" font-size="32.5" font-weight="bold" fill="#fff" stroke="#fff" stroke-width="5.6" stroke-linejoin="round" textLength="147" lengthAdjust="spacingAndGlyphs">Dyna</text></g><g transform="translate(1027,955.2) skewX(-27)"><text x="0" y="0" font-size="32.5" font-weight="bold" fill="#fff" stroke="#fff" stroke-width="5.6" stroke-linejoin="round" textLength="137.5" lengthAdjust="spacingAndGlyphs">pack</text></g><g transform="translate(879.5,955.2) skewX(-27)"><text x="0" y="0" font-size="32.5" font-weight="bold" fill="#ee1c23" stroke="#ee1c23" stroke-width="2.4" stroke-linejoin="miter" textLength="147" lengthAdjust="spacingAndGlyphs">Dyna</text></g><g transform="translate(1027,955.2) skewX(-27)"><text x="0" y="0" font-size="32.5" font-weight="bold" fill="#2b3990" stroke="#2b3990" stroke-width="2.4" stroke-linejoin="miter" textLength="137.5" lengthAdjust="spacingAndGlyphs">pack</text></g><text x="956" y="967.5" font-size="7" font-weight="bold" font-style="italic" fill="#8c8c8c" textLength="62" lengthAdjust="spacing">CHASSIS</text><text x="1047" y="967.5" font-size="7" font-weight="bold" font-style="italic" fill="#8c8c8c" textLength="121" lengthAdjust="spacing">DYNAMOMETERS</text></g>
    </svg>
  </div>
  <div id="fline"></div>
  <div id="taskbar">
    <div id="start"><svg style="left:2px;top:1px" width="17" height="18" viewBox="-0.8 1 15.5 15">
<path d="M1.5 3.5 C3.5 2 5.5 2 7.2 3.2 L6.2 8 C4.6 7 2.6 7 0.6 8.4 Z" fill="#e8502c"/>
<path d="M8.2 3.6 C10 4.8 12 4.6 14 3.2 L13 8 C11 9.4 9 9.4 7.2 8.3 Z" fill="#5cb848"/>
<path d="M0.4 9.4 C2.4 8 4.4 8 6 9 L5 13.8 C3.4 12.8 1.4 12.8 -0.6 14.2 Z" fill="#3c6cd8"/>
<path d="M7 9.4 C8.8 10.4 10.8 10.4 12.8 9 L11.8 13.8 C9.8 15.2 7.8 15.2 6 14.2 Z" fill="#f0c020"/>
</svg><b>Start</b></div>
    
<svg style="left:62px;top:5px" width="112" height="20" viewBox="0 0 112 20">
 <!-- IE -->
 <circle cx="9" cy="10" r="6" fill="#bfe0f8" stroke="#2378d0" stroke-width="3"/>
 <rect x="4" y="9" width="11" height="2.2" fill="#2a78d8"/>
 <rect x="9" y="11.2" width="7" height="2.5" fill="#d4d0c8"/>
 <path d="M1.5 15 C3 6 12 2 16.5 3.5" fill="none" stroke="#e8b020" stroke-width="1.4"/>
 <!-- notepad w/ pen -->
 <rect x="25.5" y="4.5" width="11" height="13" fill="#fff" stroke="#7090c0"/>
 <rect x="25.5" y="3" width="11" height="2" fill="#5070a0"/>
 <path d="M28 15 L36 5 L38.5 6.5 L30.5 16 Z" fill="#3060c0"/>
 <!-- calc -->
 <rect x="48.5" y="3.5" width="11" height="14" rx="1" fill="#7890d8" stroke="#5068b0"/>
 <rect x="50.5" y="5.5" width="7" height="3" fill="#c8d8f8"/>
 <g fill="#dfe6fa"><rect x="50.5" y="10" width="2" height="1.6"/><rect x="53.5" y="10" width="2" height="1.6"/><rect x="56" y="10" width="2" height="1.6"/><rect x="50.5" y="13" width="2" height="1.6"/><rect x="53.5" y="13" width="2" height="1.6"/><rect x="56" y="13" width="2" height="1.6"/></g>
 <!-- paint cup -->
 <path d="M71.5 8 L82.5 8 L79.5 18 L74.5 18 Z" fill="#5a4a3a"/>
 <path d="M73 9 L72 3" stroke="#c03020" stroke-width="1.8"/><path d="M76 9 L75.5 2" stroke="#d8a020" stroke-width="1.8"/><path d="M79 9 L80.5 3" stroke="#3060c0" stroke-width="1.8"/><path d="M81 9 L83.5 4" stroke="#30a040" stroke-width="1.6"/>
 <path d="M74 9 L76 17 M77 9 L77 17 M80 9 L78.5 17" stroke="#d83020" stroke-width="1.2"/><path d="M75.500 9 L76.500 17" stroke="#40b050" stroke-width="1"/><path d="M78.500 9 L78 17" stroke="#e0c020" stroke-width="1"/>
 <!-- blue rounded icon -->
 <rect x="92.500" y="3.500" width="14" height="13" rx="3" fill="#2a68c8" stroke="#1a4898"/>
 <rect x="95.500" y="6.500" width="7" height="7" fill="#fff"/>
 <path d="M97 10 L104 6" stroke="#2a68c8" stroke-width="1.6"/>
</svg>
    <div id="task"><svg class="appicon" style="left:3px;top:2px" width="16" height="16" viewBox="0 0 16 16">
<rect x="0" y="0" width="16" height="16" fill="#000"/>
<path d="M1 16 L1 10 C3 7.5 6 7 8 8 C11 9.5 13 12 15 13 L15 16 Z" fill="#ff4010"/>
<path d="M1 16 L1 11.5 C3 9.5 6 9 8 10 C11 11.5 13 13.5 15 14.5 L15 16 Z" fill="#ffff00"/>
<path d="M1 8 C4 4 7 2 9.5 2 C12 2 13.5 4 15 6" fill="none" stroke="#30d8c8" stroke-width="1.3"/>
<rect x="0.5" y="0.5" width="15" height="15" fill="none" stroke="#c01838" stroke-width="1"/>
</svg><b>DAQPLUS</b></div>
    <div id="tray">
<svg style="left:3px;top:1px" width="72" height="19" viewBox="0 0 72 19">
 <!-- people + red x -->
 <circle cx="9" cy="4.5" r="3" fill="#307888"/><path d="M4 13 C4 8 14 8 14 13 Z" fill="#307888"/>
 <circle cx="4" cy="8" r="2.2" fill="#50b070"/><path d="M1 15 C1 11 7 11 7 15 Z" fill="#50b070"/>
 <circle cx="12" cy="14" r="4" fill="#e03828"/><path d="M10 12 L14 16 M14 12 L10 16" stroke="#fff" stroke-width="1.4"/>
 <!-- dropbox + check -->
 <g transform="translate(-3,0)">
 <path d="M20 5 L24 2.500 L28 5 L32 2.500 L36 5 L32 7.500 L36 10 L32 12.500 L28 10 L24 12.500 L20 10 L24 7.500 Z" fill="#4a98e4" stroke="#2a68b8" stroke-width="0.6"/>
 <path d="M24 7.5 L28 5 L32 7.5 L28 10 Z" fill="#9cc8f4"/>
 <circle cx="31" cy="14" r="4" fill="#28a040"/><path d="M29 14 L30.500 15.800 L33.500 12.200" stroke="#fff" stroke-width="1.4" fill="none"/>
 </g>
 <!-- blue circle + red x -->
 <g transform="translate(-2,0)">
 <circle cx="45" cy="9" r="7" fill="#2a80d8" stroke="#e8f0fa" stroke-width="1"/>
 <circle cx="42.500" cy="9.500" r="2" fill="#d8ecff"/><circle cx="47" cy="6.500" r="1.500" fill="#d8ecff"/>
 <path d="M48 11.500 L52.500 16 M52.500 11.500 L48 16" stroke="#e03020" stroke-width="2"/>
 </g>
 <!-- green grid -->
 <g transform="translate(-2,0)">
 <rect x="57" y="3" width="12" height="13" fill="#20f020"/>
 <rect x="57" y="3" width="12" height="5" fill="#186818"/>
 <path d="M57 5.500 H69 M60 3 V8 M63 3 V8 M66 3 V8" stroke="#20f020" stroke-width="0.6"/>
 </g>
</svg><span class="abs" id="clock">7:26 a.m.</span></div>
  </div>
</div>
</body></html>
